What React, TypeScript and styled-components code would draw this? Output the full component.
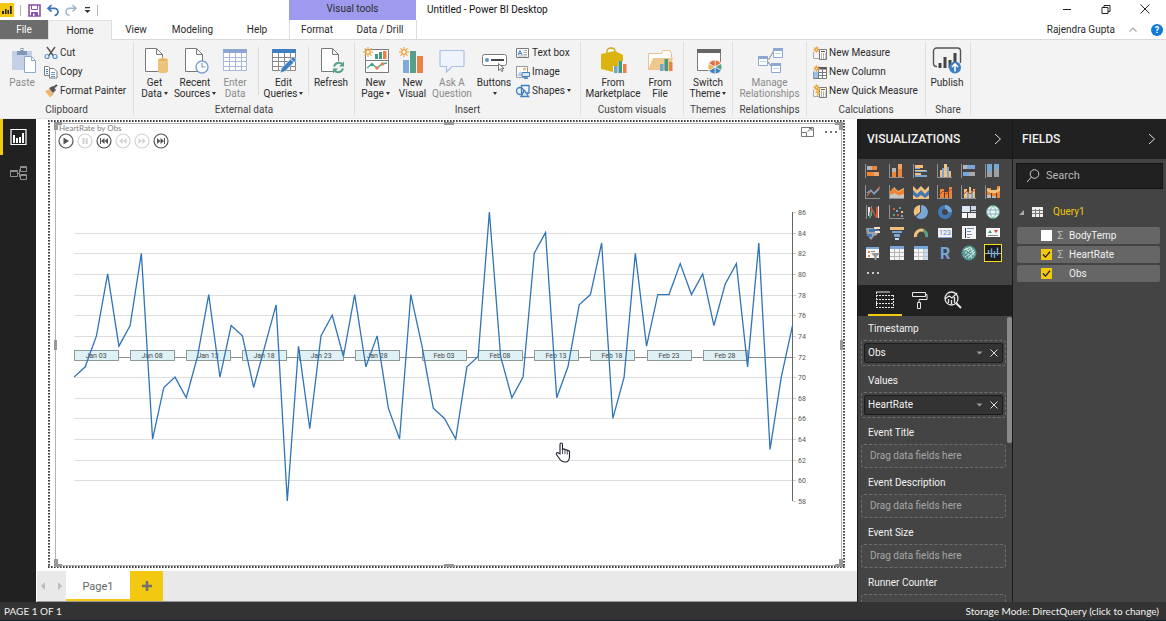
import React, { ReactNode } from 'react';
import styled, { createGlobalStyle, css } from 'styled-components';

const GlobalStyle = createGlobalStyle`
  *, *::before, *::after { box-sizing: border-box; }
  body { margin: 0; font-family: Roboto, "Liberation Sans", sans-serif; font-size: 10px; line-height: 12px; color: #2b2b2b; background: #fff; }
  button, input { font: inherit; color: inherit; margin: 0; padding: 0; border: 0; background: none; }
  svg { display: block; flex: none; overflow: visible; }
`;

const Shell = styled.div`
  display: flex;
  flex-direction: column;
  height: 100vh;
  min-width: 980px;
  overflow: hidden;
`;

/* ---------- title bar ---------- */

const TitleBar = styled.header`
  display: flex;
  height: 20px;
`;

const QuickAccess = styled.div`
  display: flex;
  align-items: center;
  width: 289px;
  gap: 6px;
`;

const Divider = styled.span`
  width: 1px;
  height: 11px;
  background: #b4b4b4;
`;

const PlainButton = styled.button`
  display: flex;
  align-items: center;
  justify-content: center;
`;

const ContextLabel = styled.div`
  width: 127px;
  padding-top: 3px;
  background: #9e9bee;
  text-align: center;
`;

const WindowTitle = styled.h1`
  flex: 1;
  margin: 0;
  padding: 4px 11px;
  font-size: 10px;
  font-weight: 400;
  line-height: 12px;
  color: #111;
`;

const WindowControls = styled.div`
  display: flex;
  align-items: center;
  height: 18px;
  padding-right: 2px;
`;

const WindowButton = styled(PlainButton)`
  width: 39px;
  height: 18px;
`;

/* ---------- ribbon tabs ---------- */

const TabRow = styled.nav`
  display: flex;
  height: 20px;
  border-bottom: 1px solid #d9d9d9;
`;

const TabSet = styled.div<{ $context?: boolean }>`
  display: flex;
  width: ${p => (p.$context ? '128px' : '289px')};
  ${p => p.$context && css`
    border-left: 1px solid #dcdce8;
    border-right: 1px solid #dcdce8;
  `}
`;

const Tab = styled.button<{ $w: number; $kind?: 'file' | 'active' }>`
  width: ${p => p.$w}px;
  height: 19px;
  ${p => p.$kind === 'file' && css`background: #6c6c6c; color: #fff;`}
  ${p => p.$kind === 'active' && css`
    height: 20px;
    background: #f3f3f3;
    border: 1px solid #dedede;
    border-bottom: 0;
  `}
`;

const Account = styled.div`
  display: flex;
  flex: 1;
  align-items: center;
  justify-content: flex-end;
  gap: 14px;
  padding-right: 3px;
`;

/* ---------- ribbon ---------- */

const Ribbon = styled.section`
  display: flex;
  height: 79px;
  flex: none;
  background: #f3f3f3;
  border-bottom: 1px solid #e6e6e6;
`;

const Group = styled.section<{ $w: number }>`
  display: flex;
  flex-direction: column;
  width: ${p => p.$w}px;
  margin: 2px 0;
  border-right: 1px solid #dfdfdf;
`;

const GroupBody = styled.div`
  display: flex;
  flex: 1;
  align-items: flex-start;
`;

const GroupLabel = styled.h2`
  margin: 0;
  font-size: 10px;
  font-weight: 400;
  line-height: 12px;
  text-align: center;
  color: #444;
`;

const BigButton = styled.button<{ $w: number; $dim?: boolean }>`
  display: flex;
  flex-direction: column;
  align-items: center;
  width: ${p => p.$w}px;
  padding-top: 4px;
  line-height: 11px;
  white-space: nowrap;
  color: ${p => (p.$dim ? '#8a8a8a' : '#2b2b2b')};
  > svg { margin-bottom: 3px; }
`;

const InnerRule = styled.span`
  width: 1px;
  height: 48px;
  margin: 5px 3px 0 3px;
  background: #dcdcdc;
`;

const Stack = styled.div<{ $inset?: number }>`
  display: flex;
  flex-direction: column;
  padding: 1px 0 0 ${p => p.$inset ?? 0}px;
`;

const SmallButton = styled.button`
  display: flex;
  align-items: center;
  gap: 2px;
  height: 19px;
  white-space: nowrap;
`;

const Caret = styled.span`
  display: inline-block;
  margin-left: 2px;
  vertical-align: 2px;
  border: 2px solid transparent;
  border-top: 3px solid #333;
  border-bottom: 0;
`;

/* ---------- workspace ---------- */

const Workspace = styled.div`
  display: flex;
  flex: 1;
  min-height: 0;
`;

const ViewRail = styled.nav`
  width: 36px;
  flex: none;
  background: #212121;
`;

const RailButton = styled.button<{ $active?: boolean }>`
  display: flex;
  align-items: center;
  width: 36px;
  height: 36px;
  padding-left: ${p => (p.$active ? 7 : 10)}px;
  border-left: ${p => (p.$active ? '3px solid #f2c811' : '0')};
`;

const Center = styled.main`
  display: flex;
  flex: 1;
  flex-direction: column;
  min-width: 0;
`;

const PageArea = styled.div`
  display: flex;
  flex: 1;
  min-height: 0;
  padding: 1px 12px 3px 12px;
`;

const dots = '#444 0 1px, #8c8c8c 1px 2px, #fff 2px 3px';
const dotsX = `repeating-linear-gradient(90deg, ${dots})`;
const dotsY = `repeating-linear-gradient(180deg, ${dots})`;

const PageOutline = styled.div`
  display: flex;
  flex: 1;
  min-width: 0;
  padding: 3px 3px 2px 7px;
  background:
    ${dotsX} top / 100% 2px no-repeat,
    ${dotsX} bottom / 100% 2px no-repeat,
    ${dotsY} left / 2px 100% no-repeat,
    ${dotsY} right / 2px 100% no-repeat;
`;

const VisualFrame = styled.figure`
  position: relative;
  display: flex;
  flex: 1;
  flex-direction: column;
  min-width: 0;
  min-height: 0;
  margin: 0;
  border: 1px solid #b4b4b4;
`;

const VisualHeader = styled.div`
  display: flex;
  justify-content: space-between;
  height: 30px;
`;

const VisualTitle = styled.figcaption`
  padding-left: 3px;
  font-family: Lato, sans-serif;
  font-size: 8px;
  line-height: 8px;
  color: #808080;
`;

const Player = styled.div`
  display: flex;
  gap: 3px;
  padding: 1px 0 0 2px;
`;

const VisualActions = styled.div`
  display: flex;
  align-items: flex-start;
  gap: 11px;
  padding: 3px 3px 0 0;
`;

const ChartSvg = styled.svg`
  width: 100%;
  flex: 1;
  min-height: 0;
`;

const Handle = styled.span<{ $at: string }>`
  position: absolute;
  ${p => ({
    nw: 'left:-2px;top:-2px;width:8px;height:8px;border-left:4px solid #999;border-top:3px solid #999;',
    ne: 'right:-2px;top:-2px;width:8px;height:8px;border-right:4px solid #999;border-top:3px solid #999;',
    sw: 'left:-2px;bottom:-2px;width:8px;height:8px;border-left:4px solid #999;border-bottom:3px solid #999;',
    se: 'right:-2px;bottom:-2px;width:8px;height:8px;border-right:4px solid #999;border-bottom:3px solid #999;',
    n: 'left:50%;top:-2px;width:10px;height:3px;margin-left:-5px;background:#999;',
    s: 'left:50%;bottom:-2px;width:10px;height:3px;margin-left:-5px;background:#999;',
    w: 'top:50%;left:-2px;width:3px;height:10px;margin-top:-5px;background:#999;',
    e: 'top:50%;right:-2px;width:3px;height:10px;margin-top:-5px;background:#999;',
  } as Record<string, string>)[p.$at]}
`;

const PageTabs = styled.div`
  display: flex;
  height: 31px;
  flex: none;
  margin-left: 1px;
  background: #e9e9e9;
  border-bottom: 1px solid #999;
`;

const PageArrows = styled.div`
  display: flex;
  justify-content: space-between;
  width: 29px;
  padding: 0 4px;
`;

const PageTab = styled.button`
  width: 64px;
  padding-top: 3px;
  background: #fff;
  border-bottom: 2px solid #f2c811;
  font-size: 11px;
  color: #666;
`;

const AddPage = styled(PlainButton)`
  width: 33px;
  background: #f2c811;
`;

/* ---------- side panes ---------- */

const Pane = styled.aside<{ $w: number }>`
  display: flex;
  flex-direction: column;
  width: ${p => p.$w}px;
  flex: none;
  overflow: hidden;
  background: #444;
  border-left: 1px solid #1a1a1a;
  color: #f2f2f2;
`;

const PaneHeader = styled.header`
  display: flex;
  align-items: center;
  justify-content: space-between;
  height: 40px;
  flex: none;
  padding: 0 10px 0 9px;
  background: #212121;
`;

const PaneTitle = styled.h2`
  margin: 0;
  font-size: 12px;
  font-weight: 500;
  line-height: 16px;
`;

const Gallery = styled.div`
  display: grid;
  grid-template-columns: repeat(6, 24px);
  grid-template-rows: repeat(6, 1fr);
  align-items: center;
  height: 126px;
  flex: none;
  padding: 2px 3px 1px 3px;
`;

const VisualChoice = styled.button<{ $selected?: boolean }>`
  display: flex;
  align-items: center;
  justify-content: center;
  width: 18px;
  height: 18px;
  margin: 0 3px;
  border: ${p => (p.$selected ? '1px solid #f6e11c' : '0')};
  background: ${p => (p.$selected ? '#1c1c1c' : 'none')};
`;

const BuildTabs = styled.div`
  display: flex;
  height: 31px;
  flex: none;
  padding-left: 10px;
  background: #212121;
`;

const BuildTab = styled.button<{ $active?: boolean }>`
  display: flex;
  align-items: center;
  justify-content: center;
  width: 34px;
  border-bottom: 2px solid ${p => (p.$active ? '#f2c811' : 'transparent')};
`;

const Wells = styled.div`
  position: relative;
  flex: 1;
  min-height: 0;
  padding: 0 6px 0 3px;
  overflow: hidden;
`;

const ScrollThumb = styled.span`
  position: absolute;
  top: 1px;
  right: 0;
  width: 5px;
  height: 44%;
  border-radius: 2px;
  background: #8a8a8a;
`;

const WellName = styled.h3`
  margin: 0;
  padding: 1px 0 0 7px;
  font-size: 10px;
  font-weight: 400;
  line-height: 23px;
`;

const Well = styled.div<{ $filled?: boolean }>`
  display: flex;
  align-items: center;
  height: ${p => (p.$filled ? 26 : 24)}px;
  margin-bottom: 2px;
  padding: ${p => (p.$filled ? '2px' : '0 8px')};
  border: 1px dashed #6e6e6e;
  border-radius: 3px;
  background: ${p => (p.$filled ? 'none' : '#484848')};
  color: #a6a6a6;
`;

const WellField = styled.div`
  display: flex;
  flex: 1;
  align-items: center;
  gap: 7px;
  height: 20px;
  padding: 0 4px 0 3px;
  border: 1px solid #1c1c1c;
  border-radius: 2px;
  background: #333;
  color: #f2f2f2;
  > span { flex: 1; }
`;

const SearchBox = styled.label`
  display: flex;
  align-items: center;
  gap: 6px;
  height: 26px;
  margin: 4px 3px 12px 3px;
  padding: 0 9px;
  background: #212121;
  border: 1px solid #151515;
`;

const SearchInput = styled.input`
  flex: 1;
  min-width: 0;
  font-size: 11px;
  outline: 0;
  &::placeholder { color: #b8b8b8; opacity: 1; }
`;

const TableHead = styled.div`
  display: flex;
  align-items: center;
  gap: 8px;
  height: 22px;
  margin-bottom: 4px;
  padding-left: 6px;
  color: #f2c811;
  > span { padding-left: 2px; }
`;

const FieldList = styled.ul`
  display: grid;
  gap: 2px;
  margin: 0;
  padding: 0 6px 0 4px;
  list-style: none;
`;

const FieldRow = styled.label`
  display: flex;
  align-items: center;
  gap: 3px;
  height: 17px;
  padding-left: 24px;
  border-radius: 2px;
  background: #666;
`;

const FieldCheck = styled.input`
  width: 11px;
  height: 11px;
  appearance: none;
  background: #fff center / 9px no-repeat;
  &:checked {
    background-color: #f2c811;
    background-image: url("data:image/svg+xml,%3Csvg xmlns='http://www.w3.org/2000/svg' viewBox='0 0 9 9'%3E%3Cpath d='M1 4.5l2.4 2.6L8 1.8' fill='none' stroke='%23222' stroke-width='1.3'/%3E%3C/svg%3E");
  }
`;

const Sigma = styled.span`
  width: 11px;
  text-align: center;
  font-size: 11px;
  color: #bdbdbd;
`;

const StatusBar = styled.footer`
  display: flex;
  align-items: center;
  justify-content: space-between;
  height: 19px;
  flex: none;
  padding: 0 7px 0 4px;
  background: #333;
  border-bottom: 1px solid #10242c;
  font-family: Lato, "Liberation Sans", sans-serif;
  color: #f2f2f2;
`;

/* ---------- ribbon icons ---------- */

const G = '#7a7a7a';
const BLUE = '#3e7fc1';

const Big = ({ children }: { children: ReactNode }) => (
  <svg width="28" height="28" viewBox="0 0 28 28" fill="none">{children}</svg>
);
const Small = ({ children }: { children: ReactNode }) => (
  <svg width="14" height="14" viewBox="0 0 14 14" fill="none">{children}</svg>
);
const Sheet = () => <path d="M4.500 2.500h11l6 6v17h-17zM15.500 2.500v6h6" fill="#fff" stroke={G} />;
const Spark = ({ x = 6, y = 6, r = 5 }) => (
  <g stroke="#e8a33c" strokeWidth="1.100">
    {[0, 45, 90, 135].map(a => (
      <path key={a} d={`M${x - r} ${y}h${r * 2}`} transform={`rotate(${a} ${x} ${y})`} />
    ))}
    <circle cx={x} cy={y} r={r * 0.45} fill="#f9f1e4" />
  </g>
);
const MiniBars = ({ x, y }: { x: number; y: number }) => (
  <g>
    <path d={`M${x} ${y + 5}h3.500v7h-3.500z`} fill="#74a3d4" />
    <path d={`M${x + 4.500} ${y}h3.500v12h-3.500z`} fill="#3f9b84" />
    <path d={`M${x + 9} ${y + 3}h3.500v9h-3.500z`} fill="#ea8246" />
  </g>
);

const PasteIcon = () => (
  <Big>
    <path d="M4 5h20v19H4z" fill="#c3d0e6" />
    <path d="M9 5h3.500V2h3V5H19v4H9z" fill="#8197b8" />
    <path d="M13 3.500h2" stroke="#fff" />
    <path d="M16.500 10.500h7l4 4v12h-11z" fill="#fff" stroke="#8ea8d0" />
    <path d="M23.500 10.500v4h4" stroke="#8ea8d0" />
  </Big>
);
const GetDataIcon = () => (
  <Big>
    <Sheet />
    <path d="M17 14v11c0 3 10 3 10 0V14z" fill="#edc37b" />
    <ellipse cx="22" cy="14" rx="5" ry="2" fill="#e3b25e" stroke="#f8e3bb" strokeWidth=".6" />
  </Big>
);
const RecentIcon = () => (
  <Big>
    <Sheet />
    <circle cx="21" cy="21" r="6" fill="#fff" stroke="#7ba0d4" strokeWidth="1.400" />
    <path d="M21 17v4h3.500" stroke="#7ba0d4" strokeWidth="1.200" />
  </Big>
);
const GridIcon = ({ edit = false }) => {
  const line = edit ? '#888' : '#a9bbd9';
  return (
    <Big>
      <path d="M2.500 3.500h23v21h-23z" fill="#fff" stroke={line} />
      <path d="M2 3h24v4H2z" fill={edit ? BLUE : '#8ba6d2'} />
      <path d="M2 11.500h24M2 15.500h24M2 20.500h24M8.500 7v18M14.500 7v18M20.500 7v18" stroke={line} />
      {edit && (
        <>
          <path d="M10 27l1.500-5L23 10.500l3.500 3.500L15 25.500z" fill={BLUE} stroke="#f3f3f3" strokeWidth=".8" />
          <path d="M20.500 13l3.500 3.500" stroke="#f3f3f3" />
        </>
      )}
    </Big>
  );
};
const RefreshIcon = () => (
  <Big>
    <Sheet />
    <circle cx="21.500" cy="21.500" r="6.500" fill="#f3f3f3" />
    <path d="M17 20.500a5 5 0 0 1 8.500-2M26 22.500a5 5 0 0 1-8.500 2" stroke="#57a389" strokeWidth="2" />
    <path d="M27 15.500v5h-5zM16 27.500v-5h5z" fill="#57a389" />
  </Big>
);
const NewPageIcon = () => (
  <Big>
    <path d="M3.500 3.500h23v23h-23z" fill="#fff" stroke={G} />
    <path d="M3 14.500h24" stroke={G} />
    <path d="M13 8h3v5h-3z" fill="#3f9b84" />
    <path d="M17 6h3v7h-3z" fill="#3f9b84" />
    <path d="M21 5h3.500v8H21z" fill="#ea8246" />
    <path d="M5 22l5-4 5 4 5-4 5-1" stroke="#57a389" strokeWidth="1.600" />
    <circle cx="10" cy="18.500" r="1.500" fill="#3f9b84" />
    <circle cx="15" cy="22" r="1.800" fill="#ea8246" />
    <circle cx="20.500" cy="18" r="1.800" fill="#ea8246" />
    <Spark />
  </Big>
);
const NewVisualIcon = () => (
  <Big>
    <path d="M4 14h6v13H4z" fill="#7fa9d8" />
    <path d="M11 5h6v22h-6z" fill="#579f8b" />
    <path d="M18 10h6v17h-6z" fill="#ea8246" />
    <Spark x={5} />
  </Big>
);
const AskIcon = () => (
  <Big>
    <path d="M3 4.500h22a1 1 0 0 1 1 1v14a1 1 0 0 1-1 1H14l-5.500 5.500v-5.500H3a1 1 0 0 1-1-1v-14a1 1 0 0 1 1-1z" fill="#eff4fc" stroke="#a9c0e6" strokeWidth="1.200" />
  </Big>
);
const ButtonsIcon = () => (
  <Big>
    <rect x="2.500" y="8.500" width="24" height="11" rx="2" fill="#fff" stroke={G} />
    <circle cx="7" cy="14" r="2" fill="#5e93cf" />
    <path d="M11 14h13" stroke="#333" strokeWidth="1.800" />
    <path d="M18.500 17.500v7l2-1.500 1.300 2.500 1.200-.6-1.200-2.400h2.200z" fill="#fff" stroke="#555" strokeWidth=".8" />
  </Big>
);
const MarketIcon = () => (
  <Big>
    <path d="M8 8V5c0-4 8-4 8 0v2" stroke="#c9a810" strokeWidth="1.300" />
    <path d="M2 8l14-3 8 4v14l-6 4-16-4z" fill="#dcb40f" />
    <path d="M14 20h5v-5h5v3h4v10H14z" fill="#f3f3f3" />
    <MiniBars x={15} y={15} />
  </Big>
);
const FileIcon = () => (
  <Big>
    <path d="M2.500 23.500v-16h13l1.500-3h7l1.500 3v16z" fill="#fff" stroke="#e9c48e" />
    <path d="M2 24l5-12h20l-4 12z" fill="#efc88c" />
    <MiniBars x={14} y={13} />
  </Big>
);
const ThemeIcon = () => (
  <Big>
    <path d="M3.500 4.500h23v20h-23z" fill="#fff" stroke={G} />
    <path d="M3 3h24v4H3z" fill="#666" />
    <circle cx="21" cy="21" r="7.500" fill="#f3f3f3" />
    <g strokeWidth=".7" stroke="#f3f3f3">
      <path d="M21 21V14a7 7 0 0 1 6 3.500z" fill="#e8793c" />
      <path d="M21 21l6-3.500a7 7 0 0 1 0 7z" fill="#57a389" />
      <path d="M21 21l6 3.500a7 7 0 0 1-6 3.500z" fill={BLUE} />
      <path d="M21 21v7a7 7 0 0 1-6-3.500z" fill={BLUE} />
      <path d="M21 21l-6 3.500a7 7 0 0 1 0-7z" fill="#efb45e" />
      <path d="M21 21l-6-3.500a7 7 0 0 1 6-3.500z" fill="#e2693c" />
    </g>
  </Big>
);
const RelationIcon = () => (
  <Big>
    <path d="M11 13h2l4-7h2M11 15l5 6h2" stroke="#9a9a9a" strokeWidth="1.200" />
    {[[2, 10], [17, 2], [15, 17]].map(([x, y]) => (
      <g key={x}>
        <path d={`M${x + 0.500} ${y + 0.500}h9v9h-9z`} fill="#fff" stroke="#8ea8d6" />
        <path d={`M${x} ${y}h10v3h-10z`} fill="#8ea8d6" />
        <path d={`M${x + 2} ${y + 5.500}h6`} stroke="#c2d1ea" />
      </g>
    ))}
  </Big>
);
const PublishIcon = () => (
  <Big>
    <path d="M4 20.500H3.500a3 3 0 0 1-3-3V5a3 3 0 0 1 3-3h21a3 3 0 0 1 3 3v12" fill="none" stroke="#555" strokeWidth="1.400" />
    <path d="M7 17v5M12 11v11M17 14v8M22 7v9" stroke="#444" strokeWidth="3" />
    <circle cx="22" cy="21.500" r="6" fill={BLUE} />
    <path d="M22 25.500v-7M19 21l3-3 3 3" stroke="#fff" strokeWidth="1.600" />
  </Big>
);

const CutIcon = () => (
  <Small>
    <path d="M3 1l6.500 9M11 1L4.500 10" stroke="#555" strokeWidth="1.400" />
    <circle cx="3" cy="10.500" r="2" stroke="#5b8fcb" strokeWidth="1.200" />
    <circle cx="11" cy="10.500" r="2" stroke="#5b8fcb" strokeWidth="1.200" />
  </Small>
);
const CopyIcon = () => (
  <Small>
    <path d="M.5 1.500h4l2 2v7h-6z" fill="#fff" stroke={G} />
    <path d="M2 4.500h2M2 6.500h2M2 8.500h2" stroke={BLUE} />
    <path d="M5.500 3.500h4.500l3 3v6.500H5.500z" fill="#fff" stroke={G} />
    <path d="M7 7.500h4M7 9.500h4M7 11.500h4" stroke={BLUE} strokeWidth=".8" />
  </Small>
);
const PainterIcon = () => (
  <Small>
    <path d="M1 7l5-2 4 5-4 3.500z" fill="#ecb774" />
    <path d="M5 4l4-2 3 4-3 3z" fill="#555" />
    <path d="M9 4l4-3" stroke="#555" strokeWidth="2" />
  </Small>
);
const TextBoxIcon = () => (
  <Small>
    <path d="M.5 2.500h12v9H.5z" fill="#fff" stroke={G} />
    <path d="M2 9l2-4.500L6 9M2.700 7.500h2.600" stroke={BLUE} />
    <path d="M7.500 4.500H11M7.500 6.500H11M2 10h9M7.500 8.500H11" stroke="#999" strokeWidth=".8" />
  </Small>
);
const ImageIcon = () => (
  <Small>
    <path d="M.5 1.500h11v11H.5z" fill="#fff" stroke="#999" />
    <path d="M1 11l3-5 3 5z" fill="#b8cbe4" />
    <circle cx="8.500" cy="4" r="1.500" fill="#efb45e" />
    <path d="M6 7.500h7.500v4H6zM9.700 11v2M8 13.400h4" fill="#dce9f7" stroke={BLUE} />
  </Small>
);
const ShapesIcon = () => (
  <Small>
    <circle cx="4" cy="7" r="3.500" stroke={BLUE} strokeWidth="1.300" />
    <path d="M5.500 1.500h7.500v7.500h-7.500z" stroke={BLUE} strokeWidth="1.300" />
    <path d="M5 12.500l3.500-6 4 6z" fill="#dce9f7" stroke={BLUE} strokeWidth="1.300" />
  </Small>
);
const CalcIcon = ({ kind }: { kind: 'measure' | 'column' | 'quick' }) => (
  <Small>
    {kind === 'column' ? (
      <>
        <path d="M3.500 2.500h10v11h-13v-7" fill="#fff" stroke={G} />
        <path d="M.5 6.500H5v6.500H.5z" fill="#9cc0e6" />
        <path d="M6 2h7.500v2.500H6z" fill="#555" />
        <path d="M5.500 3v10M9.500 3v10M5.500 7.500h8M5.500 10.500h8" stroke={G} />
      </>
    ) : (
      <>
        <path d="M.5 6v6.500H6" stroke="#aaa" />
        <path d="M6.500 3.500h7v10h-7z" fill="#fff" stroke={G} />
        <path d="M8 5.500h4" stroke="#555" />
        <path d="M8 8h1m1 0h1m1 0h.7M8 10h1m1 0h1m1 0h.7M8 12h1m1 0h1m1 0h.7" stroke="#666" />
        {kind === 'quick' && <path d="M6 4L2 9h2.500L3 13.500 8 8H5.500L8 4z" fill="#f0b14a" />}
      </>
    )}
    <Spark x={3.500} y={3.500} r={3} />
  </Small>
);

/* ---------- visual gallery icons ---------- */

const O = '#ee8434', B = '#78a6d8', Y = '#f2c27c', S = '#8f8f8f', L = '#4479b5';

type Shape = [string, string];
const AX = 'M0 1h1v14H0z';
const AXB = 'M0 1h1v13h14v1H0z';

const fills: Shape[][] = [
  [[AX, S], ['M2 3h5v4H2z', '#b5b5b5'], ['M7 3h5v4H7zM2 9h7v4H2z', O], ['M9 9h5v4H9z', '#f2a468']],
  [[AXB, S], ['M3 9h4v5H3zM9 6h4v8H9z', O], ['M3 5h4v4H3z', '#b5b5b5'], ['M9 1h4v5H9z', '#f2a468']],
  [[AX, S], ['M2 2h8v3H2zM2 10h6v2H2z', Y], ['M2 5h5v1H2zM2 7h12v2H2zM2 12h12v2H2z', B], ['M2 7h10v1H2z', Y]],
  [[AXB, S], ['M3 7h2v7H3zM7 1h3v13H7z', Y], ['M5 5h2v9H5zM10 4h2v10h-2z', B], ['M12 8h2v6h-2z', Y]],
  [[AX, S], ['M2 2h12v4H2zM2 9h6v4H2z', B], ['M2 2h4v4H2z', '#b8b8b8'], ['M8 9h6v4H8z', '#a9a9a9']],
  [[AX, S], ['M2 1h5v8H2zM9 1h5v5H9z', B], ['M2 9h5v5H2zM9 6h5v8H9z', '#a0a0a0']],
  [[AXB, S]],
  [[AXB, S], ['M1 8l4-5 4 4 6-3v9H1z', Y], ['M1 8l4-4 4 4 6-3v5l-6 2-3-2-5 1z', O], ['M1 11l5-2 4 3 5-2v4H1z', '#c5c5c5']],
  [['M0 2l4 4 4-4 4 4 4-4v13H0z', Y], ['M0 6l4 4 4-4 4 4 4-4v5l-4 3-4-3-4 3-4-3z', L], ['M0 12l4 3 4-3 4 3 4-3v3H0z', Y]],
  [[AXB, S], ['M3 5h4v9H3zM8 8h3v6H8zM12 3h3v11h-3z', O]],
  [[AXB, S], ['M3 5h3v9H3zM8 3h2v11H8zM12 5h2v9h-2z', Y], ['M6 8h2v6H6zM10 7h2v7h-2z', B]],
  [[AX, S], ['M2 4h4v10H2zM7 7h4v7H7zM12 2h3v12h-3z', O], ['M2 4l4 2 5 0 4-3v4l-4 2H6l-4-2z', Y], ['M2 11h4v3H2zM7 12h4v2H7z', '#bbb']],
  [['M1 1h1v14H1zM6 2h1v10H6z', S], ['M3 3h2v9H3zM13 2h1v12h-1z', '#e8e8e8'], ['M5 4l2 0 4 8v-9h2v11h-2z', '#cc5a3c'], ['M4 8h2v6H4z', '#4b9c7c']],
  [[AXB, S], ['M4 4h2v2H4zM8 10h2v2H8z', '#d45f3c'], ['M7 6h2v2H7zM12 11h2v2h-2z', B], ['M10 3h2v2h-2zM4 10h2v2H4z', '#5aa388'], ['M12 7h2v2h-2z', Y]],
  [['M8 1a7 7 0 1 1-5 12l5-5z', B], ['M7 1v7l-5 4a7 7 0 0 1 5-11z', Y]],
  [],
  [['M1 2h8v6H1z', '#dbe6f2'], ['M10 2h5v4h-5zM10 7h5v1h-5z', '#c7d8ea'], ['M1 9h5v5H1z', '#fff'], ['M7 9h8v5H7z', '#ececec']],
  [],
  [['M1 3h7l2 2h4l-2 5-3 1-3 4-3-4H2z', '#9aa3ab'], ['M4 4h6l3 1v2H4zM2 9h5v3H3z', L], ['M9 2h6v2H9zM10 6h5v2h-5z', '#efe1c2']],
  [['M1 2h14v3H1z', Y], ['M3 6h10v2H3zM5 9h6v3H5z', B], ['M6 13h4v2H6z', '#c8daef']],
  [],
  [['M1 3h14v10H1z', '#f2f2f2'], ['M1 12h14v1H1z', B]],
  [['M1 1h14v13H1z', '#f5f5f5'], ['M4 3h1v10H4z', '#333'], ['M6 3h7v1H6zM6 6h4v1H6zM6 9h5v1H6z', '#7391b5'], ['M6 12h3v1H6z', '#888']],
  [['M1 3h14v9H1z', '#f5f5f5'], ['M3 8l2-3 2 3z', '#3d9a76'], ['M9 5h4l-2 3z', '#cf3f30'], ['M3 10h10v1H3z', '#888']],
  [['M1 2h13v11H1z', '#f5f5f5'], ['M1 2h13v2H1z', B], ['M3 6h2v2H3zM3 10h2v2H3z', O], ['M6 6h4v1H6z', '#888'], ['M6 8h9l-3.500 4v3h-2v-3z', '#999']],
  [['M1 1h14v14H1z', '#f5f5f5'], ['M1 1h14v3H1z', B], ['M1 7h14v1H1zM1 11h14v1H1zM5 4h1v11H5zM10 4h1v11h-1z', '#b5b5b5']],
  [['M1 1h14v14H1z', '#f5f5f5'], ['M10 4h5v11h-5z', '#c2dbf3'], ['M1 7h14v1H1zM1 11h14v1H1zM5 4h1v11H5zM10 4h1v11h-1z', '#c2c2c2'], ['M1 1h14v3H1z', B]],
  [],
  [],
  [],
];

const strokes: Record<number, ReactNode> = {
  6: <><path d="M2 12l4-5 3 2 6-6" stroke="#d8704a" strokeWidth="1.200" /><path d="M2 9l4-3 3 4 5-5" stroke={B} strokeWidth="1.200" /></>,
  9: <path d="M2 11l4-4 3 3 6-5" stroke="#c4472a" />,
  10: <path d="M2 11l4-4 3 3 6-5" stroke="#c4472a" />,
  15: <><circle cx="8" cy="8" r="5" stroke={L} strokeWidth="4" /><path d="M8 3a5 5 0 0 1 5 5" stroke={B} strokeWidth="4" /></>,
  17: <><circle cx="8" cy="8" r="6.500" fill="#eef4f2" stroke="#5d9a86" /><path d="M2 6h12M2 10h12M8 2c-4 4-4 8 0 12M8 2c4 4 4 8 0 12" stroke="#7fb3c9" /></>,
  20: <><path d="M2.500 12a6 6 0 0 1 8-6.500" stroke={Y} strokeWidth="3" /><path d="M10.500 5.500a6 6 0 0 1 3 6.500" stroke="#5aa388" strokeWidth="3" /></>,
  21: <text x="8" y="10" textAnchor="middle" fontSize="7" fill="#4d81b8">123</text>,
  27: <text x="8" y="14" textAnchor="middle" fontSize="16" fontWeight="700" fill={B}>R</text>,
  28: <><circle cx="8" cy="8" r="7" fill="#62a38f" stroke="#4d8f9c" /><path d="M3 5l7-3M3 9l8-6M4 12l9-7M7 13l7-6M5 3l6 10M10 3l3 7" stroke="#dfeee8" /><path d="M6 6l4 4M3 8l4 5" stroke={L} /></>,
  29: <><path d="M0 8.500h16" stroke="#d8d8d8" strokeWidth=".8" /><path d="M3.500 8V5M6.500 3.500v9M9.500 6v7M12.500 2.500v8" stroke="#6fa8e0" strokeWidth="1.500" /></>,
};

const visualNames = ['Stacked bar', 'Stacked column', 'Clustered bar', 'Clustered column', '100% bar', '100% column', 'Line', 'Area', 'Stacked area', 'Line and stacked column', 'Line and clustered column', 'Ribbon', 'Waterfall', 'Scatter', 'Pie', 'Donut', 'Treemap', 'Map', 'Filled map', 'Funnel', 'Gauge', 'Card', 'Multi-row card', 'KPI', 'Slicer', 'Table', 'Matrix', 'R script', 'ArcGIS map', 'Pulse chart'];

/* ---------- chart ---------- */

const readings = [70, 71, 74, 80, 73, 75, 82, 64, 69, 70, 68, 72, 78, 70, 75, 74, 69, 73, 77, 58, 73, 65, 74, 76, 72, 78, 71, 74, 67, 64, 78, 73, 67, 66, 64, 71, 72, 86, 72, 68, 70, 82, 84, 68, 71, 77, 78, 83, 66, 70, 82, 73, 78, 78, 81, 78, 80, 75, 79, 81, 71, 83, 63, 70, 75];
const dates: [string, number][] = [['Jan 03', 0], ['Jan 08', 5], ['Jan 13', 10], ['Jan 18', 15], ['Jan 23', 20], ['Jan 28', 25], ['Feb 03', 31], ['Feb 08', 36], ['Feb 13', 41], ['Feb 18', 46], ['Feb 23', 51], ['Feb 28', 56]];
const px = (i: number) => 18 + (i * 718.500) / 64;
const py = (v: number) => 58 + ((86 - v) * 289) / 28;

const PulseChart = () => {
  const ticks = Array.from({ length: 15 }, (_, i) => 86 - i * 2);
  return (
    <ChartSvg viewBox="0 0 785 411" role="img" aria-label="HeartRate by Obs" fontSize="7">
      {ticks.slice(1, -1).map(v => (
        <path key={v} d={`M18 ${Math.round(py(v)) + 0.500}H736`} stroke={v === 72 ? '#8c8c8c' : '#dedede'} />
      ))}
      {dates.map(([label, day]) => (
        <g key={label}>
          <rect x={Math.round(px(day)) + 0.500} y="196.500" width="44" height="10" fill="#e0f1f6" stroke="#8e9a9a" />
          <text x={Math.round(px(day)) + 22} y="204" textAnchor="middle" fill="#444">{label}</text>
        </g>
      ))}
      <path d={`M736.500 58V${py(58)}`} stroke="#666" />
      {ticks.map(v => (
        <g key={v}>
          <path d={`M737 ${Math.round(py(v)) + 0.500}h3`} stroke="#ccc" />
          <text x="742" y={Math.round(py(v)) + 3} fill="#555">{v}</text>
        </g>
      ))}
      <polyline points={readings.map((v, i) => `${px(i)},${py(v)}`).join(' ')} fill="none" stroke="#2f74b8" strokeWidth="1.300" strokeLinejoin="miter" />
      <g transform="translate(-4 -2)">
        <path d="M508 302v-9.500c0-2 2.500-2 2.500 0v5.500c0-1.500 2.500-1.500 2.500 0v.7c0-1.500 2.300-1.500 2.300 0v.8c.3-1.300 2.200-1.200 2.200.3v4.700c0 3-1.500 5.500-4.500 5.500-3.500 0-4.500-1.500-6-4l-2.500-3.500c-.8-1.800 1.200-2.500 2.200-1.400z" fill="#fff" stroke="#1d1d33" strokeWidth="1.100" />
        <path d="M510.500 298v4M513 299v3M515.300 299.500v3" stroke="#1d1d33" strokeWidth=".8" />
      </g>
    </ChartSvg>
  );
};

const playerShapes: [string, boolean, string][] = [
  ['Play', true, 'M5.500 4.500v7l5.500-3.500z'],
  ['Pause', false, 'M5.500 5h2v6h-2zM8.700 5h2v6h-2z'],
  ['First', true, 'M4 5h1v6H4zM8.500 5v6l-3.500-3zM12 5v6L8.500 8z'],
  ['Back', false, 'M7.700 5v6L4.200 8zM11.500 5v6L8 8z'],
  ['Forward', false, 'M4.500 5v6L8 8zM8.300 5v6l3.500-3z'],
  ['Last', true, 'M4 5v6l3.500-3zM7.500 5v6L11 8zM11 5h1v6h-1z'],
];

const Chevron = () => (
  <svg width="8" height="12" viewBox="0 0 8 12" fill="none"><path d="M1 1l5.500 5L1 11" stroke="#e0e0e0" /></svg>
);

const ModelIcon = () => (
  <svg width="18" height="16" viewBox="0 0 18 16" fill="none" stroke="#8f8f8f">
    <path d="M.5 5.500h7v6h-7zM10.500 1.500h6v5h-6zM10.500 9.500h6v5h-6zM7.500 8.500h2v-4h1M9.500 8.500v3.500h1" />
    <path d="M.5 6.500h7M10.500 2.500h6M10.500 10.500h6" />
  </svg>
);

const DROP_HINT = 'Drag data fields here';
const wells: { name: string; field?: string; hint?: string }[] = [
  { name: 'Timestamp', field: 'Obs' },
  { name: 'Values', field: 'HeartRate' },
  { name: 'Event Title', hint: DROP_HINT },
  { name: 'Event Description', hint: DROP_HINT },
  { name: 'Event Size', hint: DROP_HINT },
  { name: 'Runner Counter' },
];

export default function App() {
  return (
    <Shell>
      <GlobalStyle />
      <TitleBar>
        <QuickAccess>
          <svg width="14" height="14" viewBox="0 0 14 14"><path d="M0 0h14v14H0z" fill="#f2c811" /><path d="M2 8h2v3H2zM5 6h1.500v5H5zM7.500 7H9v4H7.500zM10 3h1.700v8H10z" fill="#222" /></svg>
          <Divider />
          <PlainButton aria-label="Save">
            <svg width="14" height="13" viewBox="0 0 14 13" fill="none"><path d="M2 1h11v11H2z" fill="#fff" stroke="#8a4fa8" strokeWidth="1.600" /><path d="M4.500 1v4.500h6V1" stroke="#8a4fa8" /><path d="M4.500 12V8.500h6V12" fill="#8a4fa8" stroke="#8a4fa8" /><path d="M6 9.500h1.500V12H6z" fill="#fff" /></svg>
          </PlainButton>
          <PlainButton aria-label="Undo">
            <svg width="12" height="12" viewBox="0 0 12 12" fill="none"><path d="M4.500 1L1 4.300l3.500 3.200M1 4.300h6.500a3.500 3.500 0 0 1 0 7" stroke="#3a74b8" strokeWidth="1.700" /></svg>
          </PlainButton>
          <PlainButton aria-label="Redo">
            <svg width="12" height="12" viewBox="0 0 12 12" fill="none"><path d="M7.500 1L11 4.300 7.500 7.500M11 4.300H4.500a3.500 3.500 0 0 0 0 7" stroke="#9db4cf" strokeWidth="1.500" /></svg>
          </PlainButton>
          <PlainButton aria-label="Customize">
            <svg width="8" height="8" viewBox="0 0 8 8"><path d="M2 1h5v1.200H2zM1.500 4h6l-3 3z" fill="#333" /></svg>
          </PlainButton>
          <Divider />
        </QuickAccess>
        <ContextLabel>Visual tools</ContextLabel>
        <WindowTitle>Untitled - Power BI Desktop</WindowTitle>
        <WindowControls>
          <WindowButton aria-label="Minimize"><svg width="8" height="9" viewBox="0 0 8 9"><path d="M0 4h8v1H0z" fill="#222" /></svg></WindowButton>
          <WindowButton aria-label="Restore"><svg width="10" height="10" viewBox="0 0 10 10" fill="none"><path d="M1 3.500h6v6H1zM3 3.500v-2h6v6H7" stroke="#222" /></svg></WindowButton>
          <WindowButton aria-label="Close"><svg width="10" height="10" viewBox="0 0 10 10"><path d="M.5.5l9 9M9.500.5l-9 9" stroke="#222" /></svg></WindowButton>
        </WindowControls>
      </TitleBar>

      <TabRow>
        <TabSet>
          <Tab $w={48} $kind="file">File</Tab>
          <Tab $w={64} $kind="active">Home</Tab>
          <Tab $w={48}>View</Tab>
          <Tab $w={65}>Modeling</Tab>
          <Tab $w={64}>Help</Tab>
        </TabSet>
        <TabSet $context>
          <Tab $w={54}>Format</Tab>
          <Tab $w={72}>Data / Drill</Tab>
        </TabSet>
        <Account>
          <span>Rajendra Gupta</span>
          <svg width="8" height="5" viewBox="0 0 8 5" fill="none"><path d="M.5 4.500L4 1l3.500 3.500" stroke="#aaa" strokeWidth="1.200" /></svg>
          <PlainButton aria-label="Help">
            <svg width="12" height="12" viewBox="0 0 12 12"><circle cx="6" cy="6" r="6" fill="#0f7ad8" /><text x="6" y="9" textAnchor="middle" fontSize="9" fontWeight="700" fill="#fff">?</text></svg>
          </PlainButton>
        </Account>
      </TabRow>

      <Ribbon>
        <Group $w={134}>
          <GroupBody>
            <BigButton $w={44} $dim><PasteIcon />Paste</BigButton>
            <Stack>
              <SmallButton><CutIcon />Cut</SmallButton>
              <SmallButton><CopyIcon />Copy</SmallButton>
              <SmallButton><PainterIcon />Format Painter</SmallButton>
            </Stack>
          </GroupBody>
          <GroupLabel>Clipboard</GroupLabel>
        </Group>
        <Group $w={221}>
          <GroupBody>
            <BigButton $w={41}><GetDataIcon />Get<span>Data<Caret /></span></BigButton>
            <BigButton $w={40}><RecentIcon />Recent<span>Sources<Caret /></span></BigButton>
            <BigButton $w={40} $dim><GridIcon />Enter<span>Data</span></BigButton>
            <InnerRule />
            <BigButton $w={43}><GridIcon edit />Edit<span>Queries<Caret /></span></BigButton>
            <InnerRule />
            <BigButton $w={38}><RefreshIcon />Refresh</BigButton>
          </GroupBody>
          <GroupLabel>External data</GroupLabel>
        </Group>
        <Group $w={226}>
          <GroupBody>
            <BigButton $w={41}><NewPageIcon />New<span>Page<Caret /></span></BigButton>
            <BigButton $w={33}><NewVisualIcon />New<span>Visual</span></BigButton>
            <BigButton $w={46} $dim><AskIcon />Ask A<span>Question</span></BigButton>
            <BigButton $w={38}><ButtonsIcon />Buttons<span><Caret /></span></BigButton>
            <Stack $inset={3}>
              <SmallButton><TextBoxIcon />Text box</SmallButton>
              <SmallButton><ImageIcon />Image</SmallButton>
              <SmallButton><ShapesIcon /><span>Shapes<Caret /></span></SmallButton>
            </Stack>
          </GroupBody>
          <GroupLabel>Insert</GroupLabel>
        </Group>
        <Group $w={103}>
          <GroupBody>
            <BigButton $w={64}><MarketIcon />From<span>Marketplace</span></BigButton>
            <BigButton $w={30}><FileIcon />From<span>File</span></BigButton>
          </GroupBody>
          <GroupLabel>Custom visuals</GroupLabel>
        </Group>
        <Group $w={49}>
          <GroupBody><BigButton $w={48}><ThemeIcon />Switch<span>Theme<Caret /></span></BigButton></GroupBody>
          <GroupLabel>Themes</GroupLabel>
        </Group>
        <Group $w={74}>
          <GroupBody><BigButton $w={73} $dim><RelationIcon />Manage<span>Relationships</span></BigButton></GroupBody>
          <GroupLabel>Relationships</GroupLabel>
        </Group>
        <Group $w={119}>
          <GroupBody>
            <Stack $inset={6}>
              <SmallButton><CalcIcon kind="measure" />New Measure</SmallButton>
              <SmallButton><CalcIcon kind="column" />New Column</SmallButton>
              <SmallButton><CalcIcon kind="quick" />New Quick Measure</SmallButton>
            </Stack>
          </GroupBody>
          <GroupLabel>Calculations</GroupLabel>
        </Group>
        <Group $w={45}>
          <GroupBody><BigButton $w={42}><PublishIcon />Publish</BigButton></GroupBody>
          <GroupLabel>Share</GroupLabel>
        </Group>
      </Ribbon>

      <Workspace>
        <ViewRail>
          <RailButton $active aria-label="Report">
            <svg width="18" height="16" viewBox="0 0 18 16"><path d="M1 .5h15v15H1z" fill="none" stroke="#fff" strokeWidth="1.200" /><path d="M3 6h2v8H3zM6 9h2v5H6zM9 8h2v6H9zM12 4h2v10h-2z" fill="#fff" /></svg>
          </RailButton>
          <RailButton aria-label="Model"><ModelIcon /></RailButton>
        </ViewRail>

        <Center>
          <PageArea>
            <PageOutline>
              <VisualFrame>
                <VisualHeader>
                  <div>
                    <VisualTitle>HeartRate by Obs</VisualTitle>
                    <Player>
                      {playerShapes.map(([name, on, d]) => (
                        <PlainButton key={name} aria-label={name}>
                          <svg width="16" height="16" viewBox="0 0 16 16"><circle cx="8" cy="8" r="7" fill="#fff" stroke={on ? '#555' : '#d2d2d2'} strokeWidth="1.200" /><path d={d} fill={on ? '#555' : '#d2d2d2'} /></svg>
                        </PlainButton>
                      ))}
                    </Player>
                  </div>
                  <VisualActions>
                    <PlainButton aria-label="Focus mode">
                      <svg width="13" height="10" viewBox="0 0 13 10" fill="none" stroke="#777"><path d="M.5.5h12v9H.5zM.5 5.500h5v4M6.500 4.500l4-3M8 1.500h3v2.500" /></svg>
                    </PlainButton>
                    <PlainButton aria-label="More options">
                      <svg width="13" height="10" viewBox="0 0 13 10"><path d="M0 4h2v2H0zM5 4h2v2H5zM10 4h2v2h-2z" fill="#777" /></svg>
                    </PlainButton>
                  </VisualActions>
                </VisualHeader>
                <PulseChart />
                {['nw', 'n', 'ne', 'e', 'se', 's', 'sw', 'w'].map(at => <Handle key={at} $at={at} />)}
              </VisualFrame>
            </PageOutline>
          </PageArea>
          <PageTabs>
            <PageArrows>
              <PlainButton aria-label="Previous page"><svg width="5" height="8" viewBox="0 0 5 8"><path d="M4 0v8L0 4z" fill="#bcbcbc" /></svg></PlainButton>
              <PlainButton aria-label="Next page"><svg width="5" height="8" viewBox="0 0 5 8"><path d="M1 0v8l4-4z" fill="#bcbcbc" /></svg></PlainButton>
            </PageArrows>
            <PageTab>Page1</PageTab>
            <AddPage aria-label="New page"><svg width="10" height="10" viewBox="0 0 10 10"><path d="M0 5h10M5 0v10" stroke="#707070" strokeWidth="2.500" /></svg></AddPage>
          </PageTabs>
        </Center>

        <Pane $w={155}>
          <PaneHeader><PaneTitle>VISUALIZATIONS</PaneTitle><PlainButton aria-label="Collapse visualizations"><Chevron /></PlainButton></PaneHeader>
          <Gallery>
            {visualNames.map((name, i) => (
              <VisualChoice key={name} aria-label={name} $selected={i === 29}>
                <svg width="16" height="16" viewBox="0 0 16 16" fill="none">
                  {fills[i].map(([d, fill], k) => <path key={k} d={d} fill={fill} />)}
                  {strokes[i]}
                </svg>
              </VisualChoice>
            ))}
            <VisualChoice aria-label="More visuals">
              <svg width="14" height="16" viewBox="0 0 14 16"><path d="M1 6h2v2H1zM6 6h2v2H6zM11 6h2v2h-2z" fill="#ccc" /></svg>
            </VisualChoice>
          </Gallery>
          <BuildTabs>
            <BuildTab $active aria-label="Fields">
              <svg width="18" height="18" viewBox="0 0 18 18" fill="none" stroke="#e8e8e8"><path d="M0 4.500h18M0 8.500h18M0 12.500h18M0 16.500h18" strokeDasharray="2 1" /><path d="M.5 1v16M17.500 4v13" strokeDasharray="2 1" /><path d="M0 1h14" /></svg>
            </BuildTab>
            <BuildTab aria-label="Format">
              <svg width="17" height="18" viewBox="0 0 17 18" fill="none" stroke="#e8e8e8"><path d="M1.500 1.500h13v4h-13zM14.500 3.500h1.500v5H8v3M6.500 11.500h3v6h-3z" /></svg>
            </BuildTab>
            <BuildTab aria-label="Analytics">
              <svg width="18" height="18" viewBox="0 0 18 18" fill="none" stroke="#e8e8e8"><circle cx="7.500" cy="7.500" r="6.500" strokeWidth="1.300" /><path d="M12 12l5 5" strokeWidth="2" /><path d="M1 8l4-3 3 2 5-5M4.500 8v4M7.500 9v4M10.500 6v6" strokeWidth="1.300" /></svg>
            </BuildTab>
          </BuildTabs>
          <Wells>
            {wells.map(({ name, field, hint }) => (
              <section key={name}>
                <WellName>{name}</WellName>
                <Well $filled={!!field}>
                  {field ? (
                    <WellField>
                      <span>{field}</span>
                      <PlainButton aria-label={`${field} options`}><svg width="7" height="4" viewBox="0 0 7 4"><path d="M.5.5h6L3.500 3.500z" fill="#999" /></svg></PlainButton>
                      <PlainButton aria-label={`Remove ${field}`}><svg width="8" height="8" viewBox="0 0 8 8"><path d="M.5.5l7 7M7.500.5l-7 7" stroke="#ddd" /></svg></PlainButton>
                    </WellField>
                  ) : hint}
                </Well>
              </section>
            ))}
            <ScrollThumb />
          </Wells>
        </Pane>

        <Pane $w={154}>
          <PaneHeader><PaneTitle>FIELDS</PaneTitle><PlainButton aria-label="Collapse fields"><Chevron /></PlainButton></PaneHeader>
          <SearchBox>
            <svg width="14" height="14" viewBox="0 0 14 14" fill="none" stroke="#ccc"><circle cx="8.500" cy="5" r="4.300" /><path d="M5.500 8L1 13" /></svg>
            <SearchInput type="search" placeholder="Search" aria-label="Search fields" />
          </SearchBox>
          <TableHead>
            <svg width="5" height="5" viewBox="0 0 5 5"><path d="M5 0v5H0z" fill="#aaa" /></svg>
            <svg width="11" height="10" viewBox="0 0 11 10"><path d="M0 0h11v10H0z" fill="#eee" /><path d="M0 3.500h11M0 6.500h11M3.500 2v8M7.500 2v8" stroke="#777" /></svg>
            <span>Query1</span>
          </TableHead>
          <FieldList>
            {[['BodyTemp', false, 'Σ'], ['HeartRate', true, 'Σ'], ['Obs', true, '']].map(([name, on, sum]) => (
              <li key={name as string}>
                <FieldRow>
                  <FieldCheck type="checkbox" defaultChecked={on as boolean} />
                  <Sigma>{sum}</Sigma>
                  {name}
                </FieldRow>
              </li>
            ))}
          </FieldList>
        </Pane>
      </Workspace>

      <StatusBar>
        <span>PAGE 1 OF 1</span>
        <PlainButton>Storage Mode: DirectQuery (click to change)</PlainButton>
      </StatusBar>
    </Shell>
  );
}
